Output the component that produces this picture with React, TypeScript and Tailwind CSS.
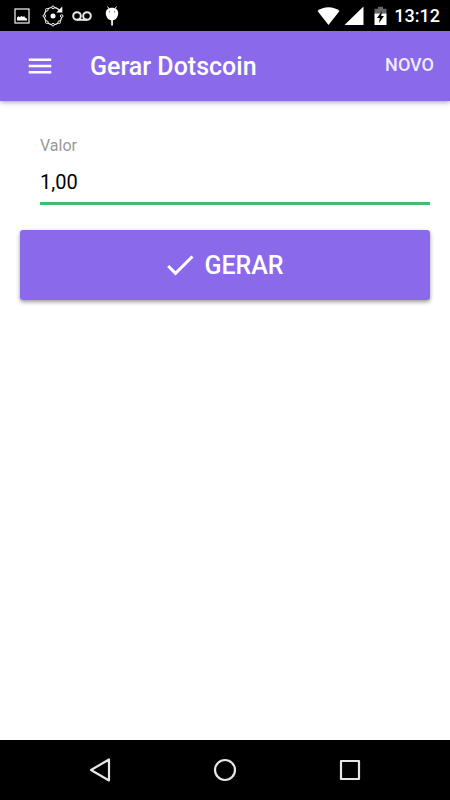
import React, { useState } from 'react';

const StatusBar = () => (
  <div className="flex h-[31px] items-center justify-between bg-black pl-[14px] pr-[10px] text-white">
    <div className="flex items-center gap-3">
      <svg className="h-4 w-4" viewBox="0 0 16 16" fill="none">
        <rect x="1" y="1" width="14" height="14" stroke="#e4e4e4" strokeWidth="1.3" />
        <path d="M3 12.5V9.5l1.5-1.2 1.5 1L7.2 8l1.6.8 1.4-.6 1.2 1.6 1.6.9v1.8z" fill="#fff" />
      </svg>
      <svg className="h-[22px] w-[22px]" viewBox="0 0 22 22" fill="none" stroke="#f0f0f0">
        <path d="M17.5 5.2A8.700 8.700 0 1 0 19.700 11" strokeWidth="1.200" />
        <g fill="#000" strokeWidth="1">
          <circle cx="11" cy="2.300" r="1.300" />
          <circle cx="4.800" cy="4.800" r="1.300" />
          <circle cx="2.300" cy="11" r="1.300" />
          <circle cx="4.800" cy="17.200" r="1.300" />
          <circle cx="11" cy="19.700" r="1.300" />
          <circle cx="17.200" cy="17.200" r="1.300" />
          <circle cx="19.700" cy="11" r="1.300" />
        </g>
        <circle cx="11" cy="11" r="2.500" fill="#fff" stroke="none" />
        <path d="M20.300 1.500v6h-6z" fill="#fff" stroke="none" />
      </svg>
      <svg className="h-[10px] w-5 -ml-1" viewBox="0 0 20 10" fill="none" stroke="#e8e8e8" strokeWidth="2">
        <circle cx="5" cy="5" r="3.800" />
        <circle cx="15" cy="5" r="3.800" />
        <path d="M5 8.800h10" />
      </svg>
      <svg className="h-5 w-4" viewBox="0 0 16 20" fill="#fff">
        <path d="M8 1.800c-3.900 0-6.200 2.300-6.200 5.200 0 3.800 2.500 7.500 6.200 7.500s6.200-3.700 6.200-7.500c0-2.900-2.300-5.200-6.200-5.200z" />
        <path d="M3.500.5l1.700 2.500M12.500.5l-1.700 2.500" stroke="#fff" strokeWidth="1" />
        <rect x="7.200" y="14" width="1.700" height="5.500" />
        <circle cx="5.600" cy="5.800" r=".7" fill="#777" />
        <circle cx="10.400" cy="5.800" r=".7" fill="#777" />
      </svg>
    </div>
    <div className="flex items-center">
      <svg className="h-5 w-[23px]" viewBox="0 0 23 20" fill="#fff">
        <path d="M11.500 19L.5 5C3.600 2.600 7.400 1.300 11.500 1.300S19.400 2.600 22.500 5z" />
      </svg>
      <svg className="ml-1 h-5 w-5" viewBox="0 0 20 20" fill="#fff">
        <path d="M19.500.5V19H.5z" />
      </svg>
      <svg className="ml-[10px] h-5 w-[13px]" viewBox="0 0 13 20">
        <path d="M4 .8h5v2h3.500v5H.5v-5H4z" fill="#666" />
        <path d="M.5 7.500h12V19H.5z" fill="#fff" />
        <path d="M8 5L3 12h2.800L5 17l5-7H7.200z" fill="#000" />
      </svg>
      <span className="ml-[7px] text-lg leading-5 font-medium">13:12</span>
    </div>
  </div>
);

const Header = () => (
  <header className="flex h-[70px] items-center bg-[#8a6aea] pl-[25px] pr-4 text-white shadow-[0_1px_5px_rgba(0,0,0,0.4)]">
    <button type="button" aria-label="Menu" className="mr-[35px]">
      <svg className="block h-[30px] w-[30px]" viewBox="0 0 24 24" fill="currentColor">
        <path d="M3 18h18v-2H3v2zm0-5h18v-2H3v2zm0-7v2h18V6H3z" />
      </svg>
    </button>
    <h1 className="flex-1 pt-0.5 text-[25px] leading-8 font-medium">Gerar Dotscoin</h1>
    <button type="button" className="pb-0.5 text-lg leading-6 font-medium text-[#f1ecff]">NOVO</button>
  </header>
);

const NavigationBar = () => (
  <nav className="flex h-[60px] items-center justify-center bg-black text-[#e6e6e6]">
    <button type="button" aria-label="Voltar" className="flex w-[125px] justify-center">
      <svg className="h-6 w-6" viewBox="0 0 24 24" fill="none" stroke="currentColor" strokeWidth="2.200" strokeLinejoin="round">
        <path d="M21 1.500v21L3 12z" />
      </svg>
    </button>
    <button type="button" aria-label="Início" className="flex w-[125px] justify-center">
      <svg className="h-6 w-6" viewBox="0 0 24 24" fill="none" stroke="currentColor" strokeWidth="2.200">
        <circle cx="12" cy="12" r="10" />
      </svg>
    </button>
    <button type="button" aria-label="Recentes" className="flex w-[125px] justify-center">
      <svg className="h-6 w-6" viewBox="0 0 24 24" fill="none" stroke="currentColor" strokeWidth="2.200" strokeLinejoin="round">
        <rect x="3" y="3" width="18" height="18" />
      </svg>
    </button>
  </nav>
);

const App = () => {
  const [valor, setValor] = useState('1,00');

  return (
    <div className="flex min-h-screen flex-col bg-white font-[Roboto,sans-serif]">
      <StatusBar />
      <Header />

      <main className="flex-1 px-5 pt-[33px]">
        <div className="flex flex-col pl-5">
          <label htmlFor="valor" className="text-base leading-6 text-[#999]">Valor</label>
          <input
            id="valor"
            type="text"
            inputMode="decimal"
            value={valor}
            onChange={(e) => setValor(e.target.value)}
            className="h-[47px] w-full border-b-3 border-[#3dbf6c] pt-1 text-[20px] text-black outline-none"
          />
        </div>

        <button
          type="button"
          className="mt-[25px] flex h-[70px] w-full items-center justify-center gap-1.5 rounded-[3px] bg-[#8a6aea] pr-1 text-[25px] font-medium text-white shadow-[0_2px_4px_rgba(0,0,0,0.4)]"
        >
          <svg className="h-9 w-9" viewBox="0 0 24 24" fill="currentColor">
            <path d="M9 16.170L4.830 12l-1.420 1.410L9 19 21 7l-1.410-1.410z" />
          </svg>
          <span className="pt-0.5">GERAR</span>
        </button>
      </main>

      <NavigationBar />
    </div>
  );
};

export default App;
